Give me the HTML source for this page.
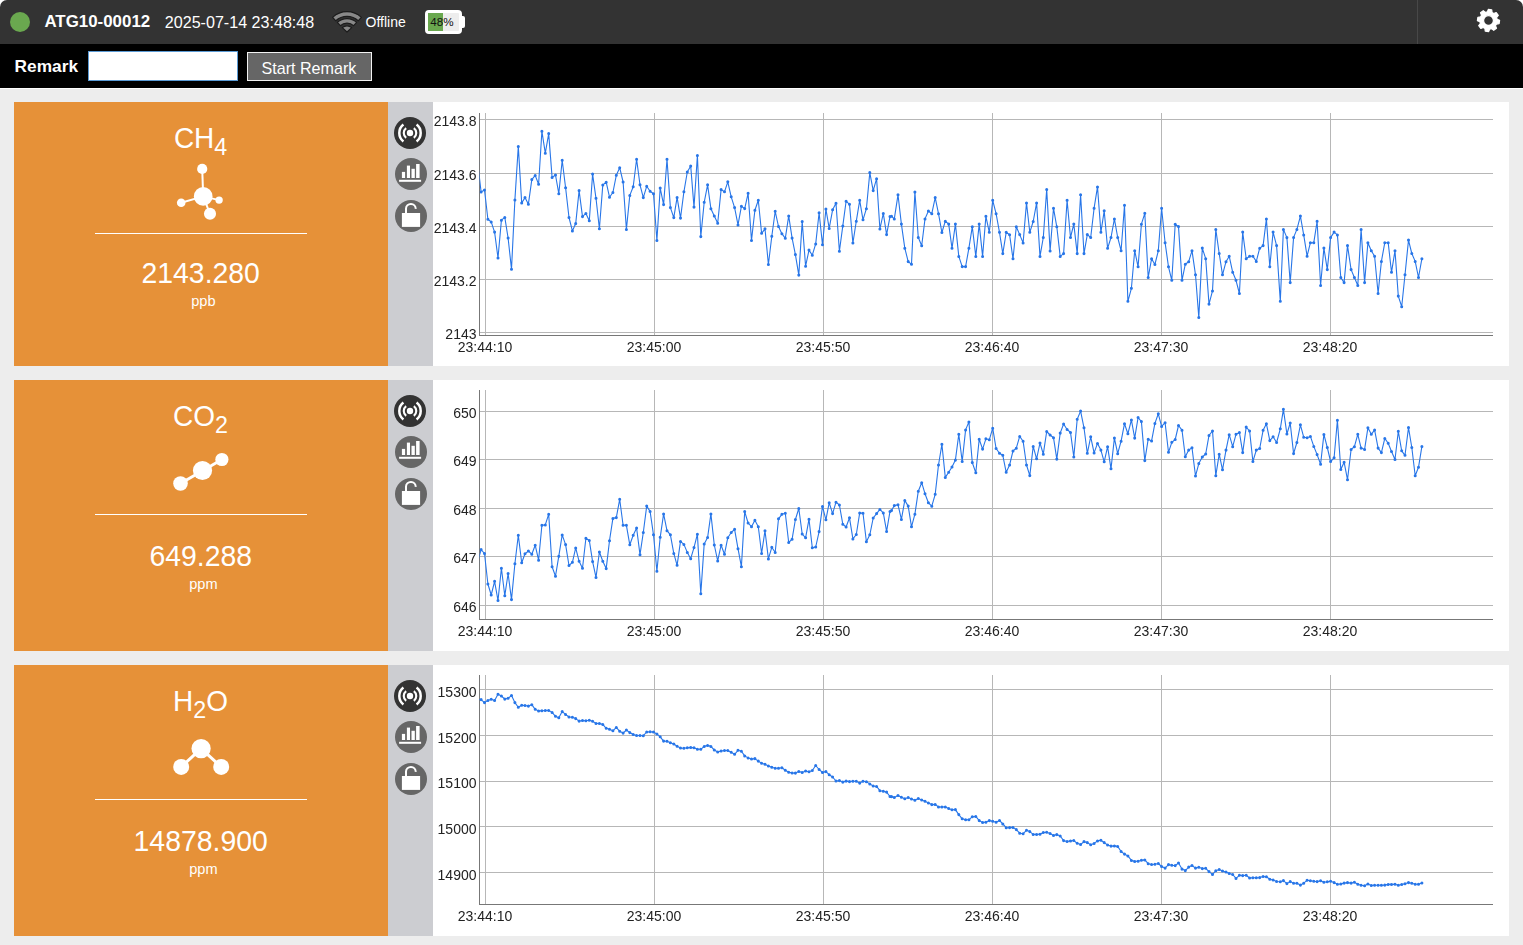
<!DOCTYPE html><html><head><meta charset="utf-8"><title>ATG10-00012</title><style>
html,body{margin:0;padding:0;background:#fff;}
body{width:1523px;height:945px;position:relative;overflow:hidden;font-family:"Liberation Sans", sans-serif;}
.abs,.ch{position:absolute;}
#bg{left:0;top:0;width:1523px;height:945px;background:#ededed;border-radius:7px 7px 0 0;}
#hdr{left:0;top:0;width:1523px;height:44px;background:#333;border-radius:7px 7px 0 0;}
#bar{left:0;top:44px;width:1523px;height:44px;background:#000;border-bottom:1px solid #fff;}
.tx{position:absolute;white-space:nowrap;line-height:1;color:#fff;}
.or{background:#e69138;left:14px;width:374px;}
.gr{background:#cccdd1;left:388px;width:45px;}
.wh{background:#fff;left:433px;width:1076px;}
.hr{background:#fff;height:1px;left:95px;width:212px;}
.g{stroke:#b7b7b7;stroke-width:1;shape-rendering:crispEdges;}
.a{stroke:#777;stroke-width:1;shape-rendering:crispEdges;}
.t{font-family:"Liberation Sans", sans-serif;font-size:14px;fill:#222;}
.l{fill:none;stroke:#2876e8;stroke-width:1.1;stroke-linejoin:round;}
.d{fill:none;stroke:#2876e8;stroke-width:3.05;stroke-linecap:round;}
sub{font-size:23.3px;line-height:0;}
</style></head><body>
<div id="bg" class="abs"></div>
<div id="hdr" class="abs"></div>
<div id="bar" class="abs"></div>
<div class="abs" style="left:10px;top:12px;width:20px;height:20px;border-radius:50%;background:#6aa84f"></div>
<div class="tx" style="left:44.4px;top:13.69px;font-size:16.9px;font-weight:bold;color:#fff;">ATG10-00012</div>
<div class="tx" style="left:164.8px;top:14.37px;font-size:16.1px;color:#fff;">2025-07-14 23:48:48</div>
<svg class="ch" style="left:328px;top:6px" width="38" height="32" viewBox="328 6 38 32"><g fill="#888" stroke="#1c1c1c" stroke-width="1.2" stroke-linejoin="round"><path d="M332.61 17.37 A21.10 21.10 0 0 1 361.39 17.37 L358.18 20.81 A16.40 16.40 0 0 0 335.82 20.81 Z"/><path d="M337.32 22.41 A14.20 14.20 0 0 1 356.68 22.41 L353.62 25.71 A9.70 9.70 0 0 0 340.38 25.71 Z"/><path d="M342.23 27.68 A7.00 7.00 0 0 1 351.77 27.68 L347.00 32.05 Z"/></g></svg>
<div class="tx" style="left:365.5px;top:14.85px;font-size:14px;color:#fff;">Offline</div>
<div class="abs" style="left:425px;top:10px;width:31px;height:18px;border:3px solid #fff;border-radius:4px;background:#ededed"></div>
<div class="abs" style="left:461px;top:16px;width:4px;height:12px;background:#fff;border-radius:0 2px 2px 0"></div>
<div class="abs" style="left:428px;top:13px;width:15px;height:18px;background:#6aa84f"></div>
<div class="tx" style="left:430.3px;top:16.18px;font-size:11.6px;color:#111;">48%</div>
<div class="abs" style="left:1417px;top:0;width:1px;height:44px;background:#484848"></div>
<svg class="ch" style="left:1473px;top:5px" width="32" height="32" viewBox="1473 5 32 32"><path d="M1487.26 11.89 L1488.31 9.40 L1491.75 9.89 L1492.07 12.56 L1493.71 13.53 L1496.21 12.52 L1498.30 15.29 L1496.63 17.41 L1497.11 19.26 L1499.60 20.31 L1499.11 23.75 L1496.44 24.07 L1495.47 25.71 L1496.48 28.21 L1493.71 30.30 L1491.59 28.63 L1489.74 29.11 L1488.69 31.60 L1485.25 31.11 L1484.93 28.44 L1483.29 27.47 L1480.79 28.48 L1478.70 25.71 L1480.37 23.59 L1479.89 21.74 L1477.40 20.69 L1477.89 17.25 L1480.56 16.93 L1481.53 15.29 L1480.52 12.79 L1483.29 10.70 L1485.41 12.37 Z M1483.60 20.50 a4.90 4.90 0 1 0 9.80 0 a4.90 4.90 0 1 0 -9.80 0 Z" fill="#fff" fill-rule="evenodd" stroke="#fff" stroke-width="1.2" stroke-linejoin="round"/></svg>
<div class="tx" style="left:14.6px;top:58.06px;font-size:17.3px;font-weight:bold;color:#fff;">Remark</div>
<div class="abs" style="left:88px;top:51px;width:148px;height:28px;background:#fff;border:1px solid #5b9bd5"></div>
<div class="abs" style="left:247px;top:52px;width:123px;height:27px;background:#666;border:1px solid #f2f2f2"></div>
<div class="tx" style="left:261.5px;top:60.07px;font-size:16.1px;color:#fff;">Start Remark</div>
<div class="abs or" style="top:102px;height:264px"></div>
<div class="abs gr" style="top:102px;height:264px"></div>
<div class="abs wh" style="top:102px;height:264px"></div>
<div class="tx" style="left:200.6px;width:400px;margin-left:-200px;text-align:center;top:125.10px;font-size:28px;transform:scaleY(1.040);transform-origin:50% 22.70px;">CH<sub>4</sub></div>
<svg class="ch" style="left:170px;top:160px" width="64" height="64" viewBox="170 160 64 64">
<line x1="203.2" y1="196.4" x2="202.2" y2="168.9" stroke="#fff" stroke-width="2"/>
<line x1="203.2" y1="196.4" x2="181.2" y2="202.8" stroke="#fff" stroke-width="2"/>
<line x1="203.2" y1="196.4" x2="219.1" y2="200.1" stroke="#fff" stroke-width="2"/>
<line x1="203.2" y1="196.4" x2="210.0" y2="213.8" stroke="#fff" stroke-width="2"/>
<circle cx="203.2" cy="196.4" r="9.35" fill="#fff"/>
<circle cx="202.2" cy="168.9" r="5.10" fill="#fff"/>
<circle cx="181.2" cy="202.8" r="4.30" fill="#fff"/>
<circle cx="219.1" cy="200.1" r="3.70" fill="#fff"/>
<circle cx="210.0" cy="213.8" r="6.05" fill="#fff"/>
</svg>
<div class="abs hr" style="top:233px"></div>
<div class="tx" style="left:200.7px;width:400px;margin-left:-200px;text-align:center;top:258.96px;font-size:28.4px;transform:scaleY(1.040);transform-origin:50% 23.04px;">2143.280</div>
<div class="tx" style="left:203.4px;width:400px;margin-left:-200px;text-align:center;top:294.04px;font-size:14.6px;">ppb</div>
<svg class="ch" style="left:388px;top:113px" width="45" height="130" viewBox="388 113 45 130">
<circle cx="410" cy="133" r="16" fill="#333"/>
<circle cx="410" cy="133" r="3.2" fill="#fff"/>
<path d="M406.15 128.07 A6.25 6.25 0 0 0 406.15 137.93" fill="none" stroke="#fff" stroke-width="2.1"/>
<path d="M413.85 128.07 A6.25 6.25 0 0 1 413.85 137.93" fill="none" stroke="#fff" stroke-width="2.1"/>
<path d="M403.41 124.57 A10.70 10.70 0 0 0 403.41 141.43" fill="none" stroke="#fff" stroke-width="2.5"/>
<path d="M416.59 124.57 A10.70 10.70 0 0 1 416.59 141.43" fill="none" stroke="#fff" stroke-width="2.5"/>
<circle cx="411" cy="174" r="16" fill="#666"/>
<rect x="401.90" y="171.90" width="3.20" height="6.10" fill="#fff"/>
<rect x="406.90" y="165.60" width="3.10" height="12.40" fill="#fff"/>
<rect x="411.50" y="168.80" width="3.30" height="9.20" fill="#fff"/>
<rect x="416.10" y="164.00" width="3.50" height="14.00" fill="#fff"/>
<rect x="399.10" y="179.80" width="22" height="2" fill="#fff"/>
<circle cx="411" cy="216" r="16" fill="#666"/>
<rect x="401.90" y="213.00" width="18.2" height="13.9" fill="#fff"/>
<path d="M406.00 213.50 V208.60 A4.85 4.85 0 0 1 415.70 208.90" fill="none" stroke="#fff" stroke-width="2"/>
</svg>
<svg class="ch" style="left:433px;top:102px;will-change:transform" width="1076" height="264" viewBox="433 102 1076 264">
<line x1="485.5" y1="113" x2="485.5" y2="335.5" class="g"/>
<line x1="654.5" y1="113" x2="654.5" y2="335.5" class="g"/>
<line x1="823.5" y1="113" x2="823.5" y2="335.5" class="g"/>
<line x1="992.5" y1="113" x2="992.5" y2="335.5" class="g"/>
<line x1="1161.5" y1="113" x2="1161.5" y2="335.5" class="g"/>
<line x1="1330.5" y1="113" x2="1330.5" y2="335.5" class="g"/>
<line x1="479" y1="119.5" x2="1493" y2="119.5" class="g"/>
<line x1="479" y1="173.5" x2="1493" y2="173.5" class="g"/>
<line x1="479" y1="226.5" x2="1493" y2="226.5" class="g"/>
<line x1="479" y1="279.5" x2="1493" y2="279.5" class="g"/>
<line x1="479" y1="332.5" x2="1493" y2="332.5" class="g"/>
<line x1="479.5" y1="113" x2="479.5" y2="336.0" class="a"/>
<line x1="479" y1="335.5" x2="1493" y2="335.5" class="a"/>
<text x="476.5" y="125.9" text-anchor="end" class="t">2143.8</text>
<text x="476.5" y="179.9" text-anchor="end" class="t">2143.6</text>
<text x="476.5" y="232.9" text-anchor="end" class="t">2143.4</text>
<text x="476.5" y="285.9" text-anchor="end" class="t">2143.2</text>
<text x="476.5" y="338.9" text-anchor="end" class="t">2143</text>
<text x="485.0" y="352.0" text-anchor="middle" class="t">23:44:10</text>
<text x="654.0" y="352.0" text-anchor="middle" class="t">23:45:00</text>
<text x="823.0" y="352.0" text-anchor="middle" class="t">23:45:50</text>
<text x="992.0" y="352.0" text-anchor="middle" class="t">23:46:40</text>
<text x="1161.0" y="352.0" text-anchor="middle" class="t">23:47:30</text>
<text x="1330.0" y="352.0" text-anchor="middle" class="t">23:48:20</text>
<clipPath id="cp0"><rect x="479.5" y="113" width="1013.5" height="222"/></clipPath>
<g clip-path="url(#cp0)"><path d="M477.7 163.0 L481.1 192.0 L484.5 189.9 L487.9 219.2 L491.2 221.9 L494.6 232.1 L498.0 258.0 L501.4 220.2 L504.8 217.4 L508.1 238.0 L511.5 269.2 L514.9 199.9 L518.3 146.4 L521.7 203.0 L525.0 197.6 L528.4 204.2 L531.8 179.6 L535.2 175.4 L538.6 184.2 L541.9 131.3 L545.3 153.2 L548.7 133.6 L552.1 177.4 L555.5 175.0 L558.8 193.7 L562.2 160.3 L565.6 187.7 L569.0 217.5 L572.4 230.9 L575.7 223.6 L579.1 190.6 L582.5 216.6 L585.9 213.4 L589.3 220.7 L592.6 174.1 L596.0 198.3 L599.4 228.8 L602.8 184.9 L606.2 182.2 L609.5 197.2 L612.9 192.5 L616.3 175.3 L619.7 167.7 L623.1 182.0 L626.4 229.5 L629.8 195.4 L633.2 186.7 L636.6 159.2 L640.0 184.8 L643.3 197.6 L646.7 186.3 L650.1 191.3 L653.5 193.7 L656.9 240.5 L660.2 188.1 L663.6 204.6 L667.0 159.2 L670.4 207.6 L673.8 217.6 L677.1 197.4 L680.5 218.1 L683.9 191.8 L687.3 172.0 L690.7 165.9 L694.0 207.1 L697.4 155.5 L700.8 236.6 L704.2 202.3 L707.6 184.8 L710.9 208.7 L714.3 216.0 L717.7 223.2 L721.1 189.6 L724.5 191.8 L727.8 181.8 L731.2 196.8 L734.6 207.6 L738.0 224.9 L741.4 206.3 L744.7 208.6 L748.1 193.3 L751.5 240.4 L754.9 210.2 L758.3 200.3 L761.6 233.3 L765.0 228.8 L768.4 264.5 L771.8 236.2 L775.2 211.3 L778.5 226.5 L781.9 233.7 L785.3 238.3 L788.7 215.9 L792.1 238.1 L795.4 254.6 L798.8 275.1 L802.2 221.6 L805.6 266.2 L809.0 250.1 L812.3 255.2 L815.7 243.9 L819.1 212.8 L822.5 244.7 L825.9 209.1 L829.2 228.4 L832.6 209.8 L836.0 203.2 L839.4 251.3 L842.8 225.9 L846.1 201.2 L849.5 204.3 L852.9 243.0 L856.3 221.2 L859.7 200.3 L863.0 219.8 L866.4 208.7 L869.8 172.6 L873.2 190.6 L876.6 178.7 L879.9 229.0 L883.3 213.4 L886.6 234.6 L890.0 216.6 L891.5 216.3 L894.3 218.9 L898.0 194.8 L901.4 224.1 L904.8 248.2 L908.2 261.6 L911.5 264.3 L914.9 192.1 L918.3 237.5 L921.7 245.7 L925.0 218.9 L928.4 211.0 L931.8 213.7 L935.2 197.6 L938.5 213.7 L941.9 232.5 L945.3 221.2 L948.7 224.1 L952.0 248.3 L955.4 224.1 L958.8 256.4 L962.2 266.6 L965.6 266.6 L968.9 248.2 L972.3 226.7 L975.8 256.4 L979.2 224.1 L982.6 256.4 L985.9 216.3 L989.3 232.3 L992.7 200.3 L996.1 213.7 L999.5 232.3 L1002.8 253.6 L1006.2 232.3 L1009.6 234.8 L1013.0 258.8 L1016.3 226.7 L1019.7 234.6 L1023.1 242.9 L1026.5 202.9 L1029.8 232.3 L1033.2 221.5 L1036.6 202.9 L1040.0 256.4 L1043.3 237.5 L1046.7 189.4 L1050.1 250.9 L1053.5 208.2 L1056.8 226.8 L1060.2 256.4 L1063.6 253.6 L1067.1 200.3 L1070.5 237.5 L1073.8 224.1 L1077.2 253.6 L1080.6 194.8 L1084.0 253.6 L1087.3 234.6 L1090.7 237.5 L1094.1 208.2 L1097.5 186.9 L1100.9 232.3 L1104.2 210.8 L1107.6 248.3 L1111.0 237.5 L1114.4 218.9 L1117.7 237.5 L1121.1 250.7 L1124.5 205.3 L1127.9 301.3 L1131.4 288.3 L1134.7 250.7 L1138.1 266.8 L1141.4 224.2 L1144.8 213.3 L1148.2 277.5 L1151.6 258.7 L1154.9 264.5 L1158.3 250.8 L1161.6 208.2 L1165.1 242.7 L1168.5 266.8 L1171.8 280.3 L1175.2 224.3 L1178.5 226.6 L1182.0 280.3 L1185.3 264.2 L1188.7 261.7 L1192.0 250.7 L1195.5 274.8 L1198.8 317.4 L1202.3 248.1 L1205.7 258.7 L1209.0 304.1 L1212.5 290.9 L1215.8 229.4 L1219.2 253.5 L1222.5 274.8 L1226.0 261.7 L1229.2 256.2 L1232.7 272.3 L1236.0 280.3 L1239.4 293.5 L1242.7 232.1 L1246.2 258.7 L1249.6 256.2 L1252.9 256.2 L1256.3 261.4 L1259.7 248.2 L1263.1 245.6 L1266.4 218.9 L1269.8 266.8 L1273.1 232.1 L1276.6 245.6 L1280.3 301.3 L1283.4 229.4 L1286.9 237.6 L1290.2 282.6 L1293.6 237.4 L1296.9 229.4 L1300.4 216.1 L1303.7 234.9 L1307.1 256.2 L1310.4 242.7 L1313.8 242.7 L1317.1 221.3 L1320.6 285.5 L1323.9 248.1 L1327.3 269.6 L1330.6 237.6 L1334.1 232.1 L1337.4 234.9 L1340.8 277.5 L1344.1 282.6 L1347.5 245.6 L1351.1 269.6 L1354.4 277.5 L1357.8 285.5 L1361.1 229.4 L1364.6 282.6 L1367.9 242.7 L1371.3 250.7 L1374.6 256.2 L1378.1 293.5 L1381.4 261.4 L1384.8 242.7 L1388.2 242.7 L1391.5 272.3 L1395.0 250.7 L1398.3 296.1 L1401.7 306.7 L1405.0 274.8 L1408.5 240.1 L1411.8 253.5 L1415.2 261.4 L1418.5 277.5 L1421.9 258.7" class="l"/>
<path d="M477.7 163.0h0M481.1 192.0h0M484.5 189.9h0M487.9 219.2h0M491.2 221.9h0M494.6 232.1h0M498.0 258.0h0M501.4 220.2h0M504.8 217.4h0M508.1 238.0h0M511.5 269.2h0M514.9 199.9h0M518.3 146.4h0M521.7 203.0h0M525.0 197.6h0M528.4 204.2h0M531.8 179.6h0M535.2 175.4h0M538.6 184.2h0M541.9 131.3h0M545.3 153.2h0M548.7 133.6h0M552.1 177.4h0M555.5 175.0h0M558.8 193.7h0M562.2 160.3h0M565.6 187.7h0M569.0 217.5h0M572.4 230.9h0M575.7 223.6h0M579.1 190.6h0M582.5 216.6h0M585.9 213.4h0M589.3 220.7h0M592.6 174.1h0M596.0 198.3h0M599.4 228.8h0M602.8 184.9h0M606.2 182.2h0M609.5 197.2h0M612.9 192.5h0M616.3 175.3h0M619.7 167.7h0M623.1 182.0h0M626.4 229.5h0M629.8 195.4h0M633.2 186.7h0M636.6 159.2h0M640.0 184.8h0M643.3 197.6h0M646.7 186.3h0M650.1 191.3h0M653.5 193.7h0M656.9 240.5h0M660.2 188.1h0M663.6 204.6h0M667.0 159.2h0M670.4 207.6h0M673.8 217.6h0M677.1 197.4h0M680.5 218.1h0M683.9 191.8h0M687.3 172.0h0M690.7 165.9h0M694.0 207.1h0M697.4 155.5h0M700.8 236.6h0M704.2 202.3h0M707.6 184.8h0M710.9 208.7h0M714.3 216.0h0M717.7 223.2h0M721.1 189.6h0M724.5 191.8h0M727.8 181.8h0M731.2 196.8h0M734.6 207.6h0M738.0 224.9h0M741.4 206.3h0M744.7 208.6h0M748.1 193.3h0M751.5 240.4h0M754.9 210.2h0M758.3 200.3h0M761.6 233.3h0M765.0 228.8h0M768.4 264.5h0M771.8 236.2h0M775.2 211.3h0M778.5 226.5h0M781.9 233.7h0M785.3 238.3h0M788.7 215.9h0M792.1 238.1h0M795.4 254.6h0M798.8 275.1h0M802.2 221.6h0M805.6 266.2h0M809.0 250.1h0M812.3 255.2h0M815.7 243.9h0M819.1 212.8h0M822.5 244.7h0M825.9 209.1h0M829.2 228.4h0M832.6 209.8h0M836.0 203.2h0M839.4 251.3h0M842.8 225.9h0M846.1 201.2h0M849.5 204.3h0M852.9 243.0h0M856.3 221.2h0M859.7 200.3h0M863.0 219.8h0M866.4 208.7h0M869.8 172.6h0M873.2 190.6h0M876.6 178.7h0M879.9 229.0h0M883.3 213.4h0M886.6 234.6h0M890.0 216.6h0M891.5 216.3h0M894.3 218.9h0M898.0 194.8h0M901.4 224.1h0M904.8 248.2h0M908.2 261.6h0M911.5 264.3h0M914.9 192.1h0M918.3 237.5h0M921.7 245.7h0M925.0 218.9h0M928.4 211.0h0M931.8 213.7h0M935.2 197.6h0M938.5 213.7h0M941.9 232.5h0M945.3 221.2h0M948.7 224.1h0M952.0 248.3h0M955.4 224.1h0M958.8 256.4h0M962.2 266.6h0M965.6 266.6h0M968.9 248.2h0M972.3 226.7h0M975.8 256.4h0M979.2 224.1h0M982.6 256.4h0M985.9 216.3h0M989.3 232.3h0M992.7 200.3h0M996.1 213.7h0M999.5 232.3h0M1002.8 253.6h0M1006.2 232.3h0M1009.6 234.8h0M1013.0 258.8h0M1016.3 226.7h0M1019.7 234.6h0M1023.1 242.9h0M1026.5 202.9h0M1029.8 232.3h0M1033.2 221.5h0M1036.6 202.9h0M1040.0 256.4h0M1043.3 237.5h0M1046.7 189.4h0M1050.1 250.9h0M1053.5 208.2h0M1056.8 226.8h0M1060.2 256.4h0M1063.6 253.6h0M1067.1 200.3h0M1070.5 237.5h0M1073.8 224.1h0M1077.2 253.6h0M1080.6 194.8h0M1084.0 253.6h0M1087.3 234.6h0M1090.7 237.5h0M1094.1 208.2h0M1097.5 186.9h0M1100.9 232.3h0M1104.2 210.8h0M1107.6 248.3h0M1111.0 237.5h0M1114.4 218.9h0M1117.7 237.5h0M1121.1 250.7h0M1124.5 205.3h0M1127.9 301.3h0M1131.4 288.3h0M1134.7 250.7h0M1138.1 266.8h0M1141.4 224.2h0M1144.8 213.3h0M1148.2 277.5h0M1151.6 258.7h0M1154.9 264.5h0M1158.3 250.8h0M1161.6 208.2h0M1165.1 242.7h0M1168.5 266.8h0M1171.8 280.3h0M1175.2 224.3h0M1178.5 226.6h0M1182.0 280.3h0M1185.3 264.2h0M1188.7 261.7h0M1192.0 250.7h0M1195.5 274.8h0M1198.8 317.4h0M1202.3 248.1h0M1205.7 258.7h0M1209.0 304.1h0M1212.5 290.9h0M1215.8 229.4h0M1219.2 253.5h0M1222.5 274.8h0M1226.0 261.7h0M1229.2 256.2h0M1232.7 272.3h0M1236.0 280.3h0M1239.4 293.5h0M1242.7 232.1h0M1246.2 258.7h0M1249.6 256.2h0M1252.9 256.2h0M1256.3 261.4h0M1259.7 248.2h0M1263.1 245.6h0M1266.4 218.9h0M1269.8 266.8h0M1273.1 232.1h0M1276.6 245.6h0M1280.3 301.3h0M1283.4 229.4h0M1286.9 237.6h0M1290.2 282.6h0M1293.6 237.4h0M1296.9 229.4h0M1300.4 216.1h0M1303.7 234.9h0M1307.1 256.2h0M1310.4 242.7h0M1313.8 242.7h0M1317.1 221.3h0M1320.6 285.5h0M1323.9 248.1h0M1327.3 269.6h0M1330.6 237.6h0M1334.1 232.1h0M1337.4 234.9h0M1340.8 277.5h0M1344.1 282.6h0M1347.5 245.6h0M1351.1 269.6h0M1354.4 277.5h0M1357.8 285.5h0M1361.1 229.4h0M1364.6 282.6h0M1367.9 242.7h0M1371.3 250.7h0M1374.6 256.2h0M1378.1 293.5h0M1381.4 261.4h0M1384.8 242.7h0M1388.2 242.7h0M1391.5 272.3h0M1395.0 250.7h0M1398.3 296.1h0M1401.7 306.7h0M1405.0 274.8h0M1408.5 240.1h0M1411.8 253.5h0M1415.2 261.4h0M1418.5 277.5h0M1421.9 258.7h0" class="d"/></g>
</svg>
<div class="abs or" style="top:380px;height:271px"></div>
<div class="abs gr" style="top:380px;height:271px"></div>
<div class="abs wh" style="top:380px;height:271px"></div>
<div class="tx" style="left:200.6px;width:400px;margin-left:-200px;text-align:center;top:403.30px;font-size:28px;transform:scaleY(1.040);transform-origin:50% 22.70px;">CO<sub>2</sub></div>
<svg class="ch" style="left:170px;top:445px" width="64" height="54" viewBox="170 445 64 54">
<line x1="180.5" y1="483.5" x2="221.9" y2="459.5" stroke="#fff" stroke-width="3"/>
<circle cx="180.5" cy="483.5" r="7.30" fill="#fff"/>
<circle cx="202.5" cy="470.5" r="9.60" fill="#fff"/>
<circle cx="221.9" cy="459.5" r="6.60" fill="#fff"/>
</svg>
<div class="abs hr" style="top:514px"></div>
<div class="tx" style="left:200.7px;width:400px;margin-left:-200px;text-align:center;top:542.46px;font-size:28.4px;transform:scaleY(1.040);transform-origin:50% 23.04px;">649.288</div>
<div class="tx" style="left:203.4px;width:400px;margin-left:-200px;text-align:center;top:577.04px;font-size:14.6px;">ppm</div>
<svg class="ch" style="left:388px;top:391px" width="45" height="130" viewBox="388 391 45 130">
<circle cx="410" cy="411" r="16" fill="#333"/>
<circle cx="410" cy="411" r="3.2" fill="#fff"/>
<path d="M406.15 406.07 A6.25 6.25 0 0 0 406.15 415.93" fill="none" stroke="#fff" stroke-width="2.1"/>
<path d="M413.85 406.07 A6.25 6.25 0 0 1 413.85 415.93" fill="none" stroke="#fff" stroke-width="2.1"/>
<path d="M403.41 402.57 A10.70 10.70 0 0 0 403.41 419.43" fill="none" stroke="#fff" stroke-width="2.5"/>
<path d="M416.59 402.57 A10.70 10.70 0 0 1 416.59 419.43" fill="none" stroke="#fff" stroke-width="2.5"/>
<circle cx="411" cy="452" r="16" fill="#666"/>
<rect x="401.90" y="448.90" width="3.20" height="6.10" fill="#fff"/>
<rect x="406.90" y="442.60" width="3.10" height="12.40" fill="#fff"/>
<rect x="411.50" y="445.80" width="3.30" height="9.20" fill="#fff"/>
<rect x="416.10" y="441.00" width="3.50" height="14.00" fill="#fff"/>
<rect x="399.10" y="456.80" width="22" height="2" fill="#fff"/>
<circle cx="411" cy="494" r="16" fill="#666"/>
<rect x="401.90" y="491.00" width="18.2" height="13.9" fill="#fff"/>
<path d="M406.00 491.50 V486.60 A4.85 4.85 0 0 1 415.70 486.90" fill="none" stroke="#fff" stroke-width="2"/>
</svg>
<svg class="ch" style="left:433px;top:380px;will-change:transform" width="1076" height="271" viewBox="433 380 1076 271">
<line x1="485.5" y1="390" x2="485.5" y2="619.5" class="g"/>
<line x1="654.5" y1="390" x2="654.5" y2="619.5" class="g"/>
<line x1="823.5" y1="390" x2="823.5" y2="619.5" class="g"/>
<line x1="992.5" y1="390" x2="992.5" y2="619.5" class="g"/>
<line x1="1161.5" y1="390" x2="1161.5" y2="619.5" class="g"/>
<line x1="1330.5" y1="390" x2="1330.5" y2="619.5" class="g"/>
<line x1="479" y1="411.5" x2="1493" y2="411.5" class="g"/>
<line x1="479" y1="459.5" x2="1493" y2="459.5" class="g"/>
<line x1="479" y1="508.5" x2="1493" y2="508.5" class="g"/>
<line x1="479" y1="556.5" x2="1493" y2="556.5" class="g"/>
<line x1="479" y1="605.5" x2="1493" y2="605.5" class="g"/>
<line x1="479.5" y1="390" x2="479.5" y2="620.0" class="a"/>
<line x1="479" y1="619.5" x2="1493" y2="619.5" class="a"/>
<text x="476.5" y="417.9" text-anchor="end" class="t">650</text>
<text x="476.5" y="465.9" text-anchor="end" class="t">649</text>
<text x="476.5" y="514.9" text-anchor="end" class="t">648</text>
<text x="476.5" y="562.9" text-anchor="end" class="t">647</text>
<text x="476.5" y="611.9" text-anchor="end" class="t">646</text>
<text x="485.0" y="635.6" text-anchor="middle" class="t">23:44:10</text>
<text x="654.0" y="635.6" text-anchor="middle" class="t">23:45:00</text>
<text x="823.0" y="635.6" text-anchor="middle" class="t">23:45:50</text>
<text x="992.0" y="635.6" text-anchor="middle" class="t">23:46:40</text>
<text x="1161.0" y="635.6" text-anchor="middle" class="t">23:47:30</text>
<text x="1330.0" y="635.6" text-anchor="middle" class="t">23:48:20</text>
<clipPath id="cp1"><rect x="479.5" y="390" width="1013.5" height="229"/></clipPath>
<g clip-path="url(#cp1)"><path d="M477.7 562.0 L481.1 549.6 L484.5 553.5 L487.9 584.0 L491.2 595.0 L494.6 581.3 L498.0 600.5 L501.4 568.2 L504.8 595.7 L508.1 573.5 L511.5 599.6 L514.9 563.7 L518.3 535.2 L521.7 562.7 L525.0 553.8 L528.4 551.0 L531.8 554.2 L535.2 545.2 L538.6 560.2 L541.9 525.2 L545.3 524.9 L548.7 514.2 L552.1 566.8 L555.5 576.2 L558.8 556.2 L562.2 534.9 L565.6 544.6 L569.0 565.5 L572.4 562.3 L575.7 547.9 L579.1 561.3 L582.5 568.2 L585.9 538.2 L589.3 540.4 L592.6 561.6 L596.0 577.4 L599.4 552.0 L602.8 561.3 L606.2 568.6 L609.5 540.7 L612.9 518.4 L616.3 517.6 L619.7 499.3 L623.1 525.3 L626.4 525.3 L629.8 544.8 L633.2 535.2 L636.6 528.0 L640.0 554.7 L643.3 532.5 L646.7 506.1 L650.1 511.4 L653.5 534.8 L656.9 571.2 L660.2 537.3 L663.6 513.9 L667.0 530.7 L670.4 534.8 L673.8 553.4 L677.1 565.3 L680.5 541.4 L683.9 544.4 L687.3 552.4 L690.7 558.7 L694.0 547.6 L697.4 534.2 L700.8 593.7 L704.2 543.9 L707.6 537.5 L710.9 513.9 L714.3 545.0 L717.7 560.9 L721.1 545.2 L724.5 554.2 L727.8 537.7 L731.2 532.5 L734.6 529.3 L738.0 548.7 L741.4 566.7 L744.7 511.6 L748.1 523.0 L751.5 526.7 L754.9 520.2 L758.3 526.7 L761.6 553.5 L765.0 530.7 L768.4 558.9 L771.8 547.3 L775.2 552.5 L778.5 518.8 L781.9 514.3 L785.3 513.3 L788.7 542.5 L792.1 539.2 L795.4 519.5 L798.8 508.5 L802.2 534.0 L805.6 537.8 L809.0 519.2 L812.3 547.7 L815.7 547.0 L819.1 531.6 L822.5 506.4 L825.9 519.8 L829.2 502.7 L832.6 513.6 L836.0 502.2 L839.4 505.0 L842.8 524.2 L846.1 527.0 L849.5 517.8 L852.9 538.9 L856.3 534.5 L859.7 512.9 L863.0 513.2 L866.4 541.7 L869.8 534.8 L873.2 518.0 L876.6 513.6 L879.9 509.4 L883.3 512.9 L886.6 531.4 L890.0 511.4 L891.5 510.5 L894.3 505.6 L898.0 504.7 L901.4 519.4 L904.8 500.4 L908.2 506.1 L911.5 526.8 L914.9 514.2 L918.3 491.2 L921.7 482.7 L925.0 493.7 L928.4 502.8 L931.8 506.2 L935.2 494.3 L938.5 465.0 L941.9 444.3 L945.3 477.4 L948.7 472.3 L952.0 467.0 L955.4 460.1 L958.8 434.3 L962.2 461.5 L965.6 429.9 L968.9 421.9 L972.3 462.6 L975.8 472.8 L979.2 439.2 L982.6 449.1 L985.9 438.8 L989.3 439.8 L992.7 428.2 L996.1 448.5 L999.5 453.3 L1002.8 455.3 L1006.2 472.3 L1009.6 465.0 L1013.0 450.9 L1016.3 448.2 L1019.7 436.4 L1023.1 441.2 L1026.5 465.0 L1029.8 475.6 L1033.2 446.4 L1036.6 458.8 L1040.0 443.0 L1043.3 454.2 L1046.7 431.5 L1050.1 435.0 L1053.5 437.7 L1056.8 459.1 L1060.2 433.1 L1063.6 424.0 L1067.1 429.5 L1070.5 432.4 L1073.8 457.0 L1077.2 419.3 L1080.6 411.1 L1084.0 427.8 L1087.3 453.3 L1090.7 436.8 L1094.1 452.9 L1097.5 443.4 L1100.9 450.1 L1104.2 461.8 L1107.6 446.7 L1111.0 468.8 L1114.4 438.1 L1117.7 453.7 L1121.1 441.2 L1124.5 423.7 L1127.9 433.7 L1131.4 420.0 L1134.7 438.1 L1138.1 417.5 L1141.4 421.6 L1144.8 460.6 L1148.2 439.2 L1151.6 440.9 L1154.9 423.4 L1158.3 413.8 L1161.6 426.4 L1165.1 422.7 L1168.5 452.3 L1171.8 442.3 L1175.2 439.5 L1178.5 425.5 L1182.0 430.2 L1185.3 456.7 L1188.7 450.1 L1192.0 447.8 L1195.5 476.0 L1198.8 463.6 L1202.3 457.0 L1205.7 454.0 L1209.0 435.4 L1212.5 431.0 L1215.8 475.7 L1219.2 454.2 L1222.5 469.8 L1226.0 450.1 L1229.2 434.7 L1232.7 446.7 L1236.0 434.3 L1239.4 432.4 L1242.7 452.6 L1246.2 427.1 L1249.6 431.0 L1252.9 461.5 L1256.3 450.1 L1259.7 448.5 L1263.1 430.3 L1266.4 423.7 L1269.8 440.6 L1273.1 436.8 L1276.6 442.5 L1280.3 428.8 L1283.4 409.3 L1286.9 434.0 L1290.2 423.0 L1293.6 453.6 L1296.9 442.5 L1300.4 424.8 L1303.7 437.2 L1307.1 437.7 L1310.4 436.4 L1313.8 446.4 L1317.1 454.6 L1320.6 464.3 L1323.9 434.4 L1327.3 447.5 L1330.6 461.5 L1334.1 457.8 L1337.4 420.3 L1340.8 469.5 L1344.1 462.2 L1347.5 479.7 L1351.1 449.4 L1354.4 446.7 L1357.8 434.3 L1361.1 448.1 L1364.6 449.4 L1367.9 427.8 L1371.3 434.3 L1374.6 429.9 L1378.1 448.1 L1381.4 452.6 L1384.8 438.4 L1388.2 443.2 L1391.5 451.5 L1395.0 459.5 L1398.3 431.3 L1401.7 450.8 L1405.0 455.3 L1408.5 427.6 L1411.8 447.5 L1415.2 475.7 L1418.5 467.3 L1421.9 446.4" class="l"/>
<path d="M477.7 562.0h0M481.1 549.6h0M484.5 553.5h0M487.9 584.0h0M491.2 595.0h0M494.6 581.3h0M498.0 600.5h0M501.4 568.2h0M504.8 595.7h0M508.1 573.5h0M511.5 599.6h0M514.9 563.7h0M518.3 535.2h0M521.7 562.7h0M525.0 553.8h0M528.4 551.0h0M531.8 554.2h0M535.2 545.2h0M538.6 560.2h0M541.9 525.2h0M545.3 524.9h0M548.7 514.2h0M552.1 566.8h0M555.5 576.2h0M558.8 556.2h0M562.2 534.9h0M565.6 544.6h0M569.0 565.5h0M572.4 562.3h0M575.7 547.9h0M579.1 561.3h0M582.5 568.2h0M585.9 538.2h0M589.3 540.4h0M592.6 561.6h0M596.0 577.4h0M599.4 552.0h0M602.8 561.3h0M606.2 568.6h0M609.5 540.7h0M612.9 518.4h0M616.3 517.6h0M619.7 499.3h0M623.1 525.3h0M626.4 525.3h0M629.8 544.8h0M633.2 535.2h0M636.6 528.0h0M640.0 554.7h0M643.3 532.5h0M646.7 506.1h0M650.1 511.4h0M653.5 534.8h0M656.9 571.2h0M660.2 537.3h0M663.6 513.9h0M667.0 530.7h0M670.4 534.8h0M673.8 553.4h0M677.1 565.3h0M680.5 541.4h0M683.9 544.4h0M687.3 552.4h0M690.7 558.7h0M694.0 547.6h0M697.4 534.2h0M700.8 593.7h0M704.2 543.9h0M707.6 537.5h0M710.9 513.9h0M714.3 545.0h0M717.7 560.9h0M721.1 545.2h0M724.5 554.2h0M727.8 537.7h0M731.2 532.5h0M734.6 529.3h0M738.0 548.7h0M741.4 566.7h0M744.7 511.6h0M748.1 523.0h0M751.5 526.7h0M754.9 520.2h0M758.3 526.7h0M761.6 553.5h0M765.0 530.7h0M768.4 558.9h0M771.8 547.3h0M775.2 552.5h0M778.5 518.8h0M781.9 514.3h0M785.3 513.3h0M788.7 542.5h0M792.1 539.2h0M795.4 519.5h0M798.8 508.5h0M802.2 534.0h0M805.6 537.8h0M809.0 519.2h0M812.3 547.7h0M815.7 547.0h0M819.1 531.6h0M822.5 506.4h0M825.9 519.8h0M829.2 502.7h0M832.6 513.6h0M836.0 502.2h0M839.4 505.0h0M842.8 524.2h0M846.1 527.0h0M849.5 517.8h0M852.9 538.9h0M856.3 534.5h0M859.7 512.9h0M863.0 513.2h0M866.4 541.7h0M869.8 534.8h0M873.2 518.0h0M876.6 513.6h0M879.9 509.4h0M883.3 512.9h0M886.6 531.4h0M890.0 511.4h0M891.5 510.5h0M894.3 505.6h0M898.0 504.7h0M901.4 519.4h0M904.8 500.4h0M908.2 506.1h0M911.5 526.8h0M914.9 514.2h0M918.3 491.2h0M921.7 482.7h0M925.0 493.7h0M928.4 502.8h0M931.8 506.2h0M935.2 494.3h0M938.5 465.0h0M941.9 444.3h0M945.3 477.4h0M948.7 472.3h0M952.0 467.0h0M955.4 460.1h0M958.8 434.3h0M962.2 461.5h0M965.6 429.9h0M968.9 421.9h0M972.3 462.6h0M975.8 472.8h0M979.2 439.2h0M982.6 449.1h0M985.9 438.8h0M989.3 439.8h0M992.7 428.2h0M996.1 448.5h0M999.5 453.3h0M1002.8 455.3h0M1006.2 472.3h0M1009.6 465.0h0M1013.0 450.9h0M1016.3 448.2h0M1019.7 436.4h0M1023.1 441.2h0M1026.5 465.0h0M1029.8 475.6h0M1033.2 446.4h0M1036.6 458.8h0M1040.0 443.0h0M1043.3 454.2h0M1046.7 431.5h0M1050.1 435.0h0M1053.5 437.7h0M1056.8 459.1h0M1060.2 433.1h0M1063.6 424.0h0M1067.1 429.5h0M1070.5 432.4h0M1073.8 457.0h0M1077.2 419.3h0M1080.6 411.1h0M1084.0 427.8h0M1087.3 453.3h0M1090.7 436.8h0M1094.1 452.9h0M1097.5 443.4h0M1100.9 450.1h0M1104.2 461.8h0M1107.6 446.7h0M1111.0 468.8h0M1114.4 438.1h0M1117.7 453.7h0M1121.1 441.2h0M1124.5 423.7h0M1127.9 433.7h0M1131.4 420.0h0M1134.7 438.1h0M1138.1 417.5h0M1141.4 421.6h0M1144.8 460.6h0M1148.2 439.2h0M1151.6 440.9h0M1154.9 423.4h0M1158.3 413.8h0M1161.6 426.4h0M1165.1 422.7h0M1168.5 452.3h0M1171.8 442.3h0M1175.2 439.5h0M1178.5 425.5h0M1182.0 430.2h0M1185.3 456.7h0M1188.7 450.1h0M1192.0 447.8h0M1195.5 476.0h0M1198.8 463.6h0M1202.3 457.0h0M1205.7 454.0h0M1209.0 435.4h0M1212.5 431.0h0M1215.8 475.7h0M1219.2 454.2h0M1222.5 469.8h0M1226.0 450.1h0M1229.2 434.7h0M1232.7 446.7h0M1236.0 434.3h0M1239.4 432.4h0M1242.7 452.6h0M1246.2 427.1h0M1249.6 431.0h0M1252.9 461.5h0M1256.3 450.1h0M1259.7 448.5h0M1263.1 430.3h0M1266.4 423.7h0M1269.8 440.6h0M1273.1 436.8h0M1276.6 442.5h0M1280.3 428.8h0M1283.4 409.3h0M1286.9 434.0h0M1290.2 423.0h0M1293.6 453.6h0M1296.9 442.5h0M1300.4 424.8h0M1303.7 437.2h0M1307.1 437.7h0M1310.4 436.4h0M1313.8 446.4h0M1317.1 454.6h0M1320.6 464.3h0M1323.9 434.4h0M1327.3 447.5h0M1330.6 461.5h0M1334.1 457.8h0M1337.4 420.3h0M1340.8 469.5h0M1344.1 462.2h0M1347.5 479.7h0M1351.1 449.4h0M1354.4 446.7h0M1357.8 434.3h0M1361.1 448.1h0M1364.6 449.4h0M1367.9 427.8h0M1371.3 434.3h0M1374.6 429.9h0M1378.1 448.1h0M1381.4 452.6h0M1384.8 438.4h0M1388.2 443.2h0M1391.5 451.5h0M1395.0 459.5h0M1398.3 431.3h0M1401.7 450.8h0M1405.0 455.3h0M1408.5 427.6h0M1411.8 447.5h0M1415.2 475.7h0M1418.5 467.3h0M1421.9 446.4h0" class="d"/></g>
</svg>
<div class="abs or" style="top:665px;height:271px"></div>
<div class="abs gr" style="top:665px;height:271px"></div>
<div class="abs wh" style="top:665px;height:271px"></div>
<div class="tx" style="left:200.6px;width:400px;margin-left:-200px;text-align:center;top:688.30px;font-size:28px;transform:scaleY(1.040);transform-origin:50% 22.70px;">H<sub>2</sub>O</div>
<svg class="ch" style="left:170px;top:735px" width="64" height="44" viewBox="170 735 64 44">
<path d="M181.2 766.9 L201.1 748.6 L221.2 766.9" fill="none" stroke="#fff" stroke-width="3"/>
<circle cx="201.1" cy="748.6" r="9.60" fill="#fff"/>
<circle cx="181.2" cy="766.9" r="8.00" fill="#fff"/>
<circle cx="221.2" cy="766.9" r="8.00" fill="#fff"/>
</svg>
<div class="abs hr" style="top:799px"></div>
<div class="tx" style="left:200.7px;width:400px;margin-left:-200px;text-align:center;top:827.46px;font-size:28.4px;transform:scaleY(1.040);transform-origin:50% 23.04px;">14878.900</div>
<div class="tx" style="left:203.4px;width:400px;margin-left:-200px;text-align:center;top:862.04px;font-size:14.6px;">ppm</div>
<svg class="ch" style="left:388px;top:676px" width="45" height="130" viewBox="388 676 45 130">
<circle cx="410" cy="696" r="16" fill="#333"/>
<circle cx="410" cy="696" r="3.2" fill="#fff"/>
<path d="M406.15 691.07 A6.25 6.25 0 0 0 406.15 700.93" fill="none" stroke="#fff" stroke-width="2.1"/>
<path d="M413.85 691.07 A6.25 6.25 0 0 1 413.85 700.93" fill="none" stroke="#fff" stroke-width="2.1"/>
<path d="M403.41 687.57 A10.70 10.70 0 0 0 403.41 704.43" fill="none" stroke="#fff" stroke-width="2.5"/>
<path d="M416.59 687.57 A10.70 10.70 0 0 1 416.59 704.43" fill="none" stroke="#fff" stroke-width="2.5"/>
<circle cx="411" cy="737" r="16" fill="#666"/>
<rect x="401.90" y="733.90" width="3.20" height="6.10" fill="#fff"/>
<rect x="406.90" y="727.60" width="3.10" height="12.40" fill="#fff"/>
<rect x="411.50" y="730.80" width="3.30" height="9.20" fill="#fff"/>
<rect x="416.10" y="726.00" width="3.50" height="14.00" fill="#fff"/>
<rect x="399.10" y="741.80" width="22" height="2" fill="#fff"/>
<circle cx="411" cy="779" r="16" fill="#666"/>
<rect x="401.90" y="776.00" width="18.2" height="13.9" fill="#fff"/>
<path d="M406.00 776.50 V771.60 A4.85 4.85 0 0 1 415.70 771.90" fill="none" stroke="#fff" stroke-width="2"/>
</svg>
<svg class="ch" style="left:433px;top:665px;will-change:transform" width="1076" height="271" viewBox="433 665 1076 271">
<line x1="485.5" y1="675" x2="485.5" y2="904.5" class="g"/>
<line x1="654.5" y1="675" x2="654.5" y2="904.5" class="g"/>
<line x1="823.5" y1="675" x2="823.5" y2="904.5" class="g"/>
<line x1="992.5" y1="675" x2="992.5" y2="904.5" class="g"/>
<line x1="1161.5" y1="675" x2="1161.5" y2="904.5" class="g"/>
<line x1="1330.5" y1="675" x2="1330.5" y2="904.5" class="g"/>
<line x1="479" y1="689.5" x2="1493" y2="689.5" class="g"/>
<line x1="479" y1="735.5" x2="1493" y2="735.5" class="g"/>
<line x1="479" y1="781.5" x2="1493" y2="781.5" class="g"/>
<line x1="479" y1="826.5" x2="1493" y2="826.5" class="g"/>
<line x1="479" y1="872.5" x2="1493" y2="872.5" class="g"/>
<line x1="479.5" y1="675" x2="479.5" y2="905.0" class="a"/>
<line x1="479" y1="904.5" x2="1493" y2="904.5" class="a"/>
<text x="476.5" y="696.9" text-anchor="end" class="t">15300</text>
<text x="476.5" y="742.7" text-anchor="end" class="t">15200</text>
<text x="476.5" y="788.4" text-anchor="end" class="t">15100</text>
<text x="476.5" y="834.1" text-anchor="end" class="t">15000</text>
<text x="476.5" y="879.9" text-anchor="end" class="t">14900</text>
<text x="485.0" y="920.6" text-anchor="middle" class="t">23:44:10</text>
<text x="654.0" y="920.6" text-anchor="middle" class="t">23:45:00</text>
<text x="823.0" y="920.6" text-anchor="middle" class="t">23:45:50</text>
<text x="992.0" y="920.6" text-anchor="middle" class="t">23:46:40</text>
<text x="1161.0" y="920.6" text-anchor="middle" class="t">23:47:30</text>
<text x="1330.0" y="920.6" text-anchor="middle" class="t">23:48:20</text>
<clipPath id="cp2"><rect x="479.5" y="675" width="1013.5" height="229"/></clipPath>
<g clip-path="url(#cp2)"><path d="M477.7 699.4 L481.1 699.6 L484.5 702.6 L487.9 700.4 L491.2 699.2 L494.6 700.4 L498.0 694.2 L501.4 696.0 L504.8 699.1 L508.1 698.3 L511.5 695.5 L514.9 702.6 L518.3 707.3 L521.7 705.3 L525.0 705.5 L528.4 706.1 L531.8 704.7 L535.2 709.3 L538.6 710.9 L541.9 710.7 L545.3 710.5 L548.7 710.4 L552.1 712.4 L555.5 716.3 L558.8 717.8 L562.2 711.6 L565.6 714.4 L569.0 717.0 L572.4 717.2 L575.7 718.6 L579.1 721.1 L582.5 720.5 L585.9 720.8 L589.3 720.3 L592.6 721.3 L596.0 723.4 L599.4 723.5 L602.8 724.4 L606.2 728.3 L609.5 729.3 L612.9 730.8 L616.3 727.4 L619.7 731.3 L623.1 733.1 L626.4 730.0 L629.8 732.6 L633.2 734.4 L636.6 735.5 L640.0 735.5 L643.3 735.7 L646.7 732.0 L650.1 731.8 L653.5 732.0 L656.9 733.9 L660.2 736.8 L663.6 741.1 L667.0 741.3 L670.4 742.7 L673.8 744.0 L677.1 746.3 L680.5 748.0 L683.9 748.3 L687.3 747.7 L690.7 747.4 L694.0 747.7 L697.4 749.3 L700.8 749.3 L704.2 746.4 L707.6 745.4 L710.9 746.4 L714.3 750.0 L717.7 752.0 L721.1 751.0 L724.5 750.5 L727.8 750.5 L731.2 752.3 L734.6 754.3 L738.0 750.3 L741.4 751.3 L744.7 755.9 L748.1 757.9 L751.5 759.0 L754.9 758.6 L758.3 761.1 L761.6 763.2 L765.0 764.2 L768.4 766.0 L771.8 767.3 L775.2 768.3 L778.5 768.3 L781.9 767.7 L785.3 770.3 L788.7 772.3 L792.1 772.9 L795.4 773.1 L798.8 771.5 L802.2 772.4 L805.6 771.0 L809.0 771.8 L812.3 770.5 L815.7 765.5 L819.1 769.5 L822.5 772.4 L825.9 771.6 L829.2 774.7 L832.6 777.0 L836.0 781.0 L839.4 780.6 L842.8 782.1 L846.1 781.1 L849.5 781.6 L852.9 781.3 L856.3 781.3 L859.7 783.1 L863.0 781.3 L866.4 781.8 L869.8 783.9 L873.2 786.0 L876.6 786.4 L879.9 790.7 L883.3 791.3 L886.6 792.1 L890.0 796.5 L891.5 796.6 L894.3 797.4 L898.0 795.4 L901.4 797.2 L904.8 798.7 L908.2 797.5 L911.5 798.9 L914.9 800.2 L918.3 798.5 L921.7 799.9 L925.0 801.2 L928.4 802.9 L931.8 804.6 L935.2 804.4 L938.5 807.0 L941.9 807.0 L945.3 806.9 L948.7 808.5 L952.0 809.8 L955.4 809.6 L958.8 814.6 L962.2 818.8 L965.6 819.7 L968.9 819.8 L972.3 816.7 L975.8 816.4 L979.2 820.6 L982.6 822.4 L985.9 822.3 L989.3 820.6 L992.7 821.3 L996.1 822.2 L999.5 820.5 L1002.8 823.9 L1006.2 827.7 L1009.6 827.6 L1013.0 827.4 L1016.3 829.6 L1019.7 833.2 L1023.1 833.7 L1026.5 830.3 L1029.8 831.6 L1033.2 834.4 L1036.6 834.4 L1040.0 834.2 L1043.3 832.5 L1046.7 832.3 L1050.1 833.5 L1053.5 835.4 L1056.8 834.6 L1060.2 836.0 L1063.6 840.6 L1067.1 841.5 L1070.5 840.9 L1073.8 840.5 L1077.2 843.3 L1080.6 844.5 L1084.0 841.6 L1087.3 842.6 L1090.7 844.7 L1094.1 843.4 L1097.5 840.9 L1100.9 840.3 L1104.2 842.6 L1107.6 845.0 L1111.0 846.1 L1114.4 845.9 L1117.7 846.4 L1121.1 851.5 L1124.5 854.1 L1127.9 855.9 L1131.4 860.4 L1134.7 861.4 L1138.1 861.2 L1141.4 860.2 L1144.8 859.9 L1148.2 863.7 L1151.6 864.5 L1154.9 864.2 L1158.3 863.5 L1161.6 866.5 L1165.1 868.1 L1168.5 864.6 L1171.8 865.3 L1175.2 865.6 L1178.5 863.0 L1182.0 869.1 L1185.3 870.6 L1188.7 867.1 L1192.0 865.5 L1195.5 868.1 L1198.8 867.3 L1202.3 868.6 L1205.7 868.3 L1209.0 871.6 L1212.5 874.4 L1215.8 870.8 L1219.2 869.4 L1222.5 870.9 L1226.0 872.0 L1229.2 873.4 L1232.7 874.5 L1236.0 878.4 L1239.4 875.3 L1242.7 875.6 L1246.2 875.3 L1249.6 878.0 L1252.9 877.7 L1256.3 877.8 L1259.7 877.6 L1263.1 876.5 L1266.4 876.7 L1269.8 879.3 L1273.1 880.0 L1276.6 881.5 L1280.3 881.8 L1283.4 880.6 L1286.9 883.6 L1290.2 881.6 L1293.6 883.2 L1296.9 883.2 L1300.4 885.1 L1303.7 883.2 L1307.1 880.3 L1310.4 880.8 L1313.8 881.3 L1317.1 881.6 L1320.6 880.7 L1323.9 882.3 L1327.3 881.8 L1330.6 881.3 L1334.1 882.6 L1337.4 884.3 L1340.8 884.0 L1344.1 883.1 L1347.5 882.6 L1351.1 883.1 L1354.4 882.2 L1357.8 884.2 L1361.1 885.3 L1364.6 885.7 L1367.9 883.9 L1371.3 885.4 L1374.6 885.2 L1378.1 885.2 L1381.4 885.3 L1384.8 885.1 L1388.2 884.4 L1391.5 884.4 L1395.0 884.3 L1398.3 885.3 L1401.7 884.5 L1405.0 883.8 L1408.5 882.6 L1411.8 883.2 L1415.2 884.3 L1418.5 884.3 L1421.9 883.0" class="l"/>
<path d="M477.7 699.4h0M481.1 699.6h0M484.5 702.6h0M487.9 700.4h0M491.2 699.2h0M494.6 700.4h0M498.0 694.2h0M501.4 696.0h0M504.8 699.1h0M508.1 698.3h0M511.5 695.5h0M514.9 702.6h0M518.3 707.3h0M521.7 705.3h0M525.0 705.5h0M528.4 706.1h0M531.8 704.7h0M535.2 709.3h0M538.6 710.9h0M541.9 710.7h0M545.3 710.5h0M548.7 710.4h0M552.1 712.4h0M555.5 716.3h0M558.8 717.8h0M562.2 711.6h0M565.6 714.4h0M569.0 717.0h0M572.4 717.2h0M575.7 718.6h0M579.1 721.1h0M582.5 720.5h0M585.9 720.8h0M589.3 720.3h0M592.6 721.3h0M596.0 723.4h0M599.4 723.5h0M602.8 724.4h0M606.2 728.3h0M609.5 729.3h0M612.9 730.8h0M616.3 727.4h0M619.7 731.3h0M623.1 733.1h0M626.4 730.0h0M629.8 732.6h0M633.2 734.4h0M636.6 735.5h0M640.0 735.5h0M643.3 735.7h0M646.7 732.0h0M650.1 731.8h0M653.5 732.0h0M656.9 733.9h0M660.2 736.8h0M663.6 741.1h0M667.0 741.3h0M670.4 742.7h0M673.8 744.0h0M677.1 746.3h0M680.5 748.0h0M683.9 748.3h0M687.3 747.7h0M690.7 747.4h0M694.0 747.7h0M697.4 749.3h0M700.8 749.3h0M704.2 746.4h0M707.6 745.4h0M710.9 746.4h0M714.3 750.0h0M717.7 752.0h0M721.1 751.0h0M724.5 750.5h0M727.8 750.5h0M731.2 752.3h0M734.6 754.3h0M738.0 750.3h0M741.4 751.3h0M744.7 755.9h0M748.1 757.9h0M751.5 759.0h0M754.9 758.6h0M758.3 761.1h0M761.6 763.2h0M765.0 764.2h0M768.4 766.0h0M771.8 767.3h0M775.2 768.3h0M778.5 768.3h0M781.9 767.7h0M785.3 770.3h0M788.7 772.3h0M792.1 772.9h0M795.4 773.1h0M798.8 771.5h0M802.2 772.4h0M805.6 771.0h0M809.0 771.8h0M812.3 770.5h0M815.7 765.5h0M819.1 769.5h0M822.5 772.4h0M825.9 771.6h0M829.2 774.7h0M832.6 777.0h0M836.0 781.0h0M839.4 780.6h0M842.8 782.1h0M846.1 781.1h0M849.5 781.6h0M852.9 781.3h0M856.3 781.3h0M859.7 783.1h0M863.0 781.3h0M866.4 781.8h0M869.8 783.9h0M873.2 786.0h0M876.6 786.4h0M879.9 790.7h0M883.3 791.3h0M886.6 792.1h0M890.0 796.5h0M891.5 796.6h0M894.3 797.4h0M898.0 795.4h0M901.4 797.2h0M904.8 798.7h0M908.2 797.5h0M911.5 798.9h0M914.9 800.2h0M918.3 798.5h0M921.7 799.9h0M925.0 801.2h0M928.4 802.9h0M931.8 804.6h0M935.2 804.4h0M938.5 807.0h0M941.9 807.0h0M945.3 806.9h0M948.7 808.5h0M952.0 809.8h0M955.4 809.6h0M958.8 814.6h0M962.2 818.8h0M965.6 819.7h0M968.9 819.8h0M972.3 816.7h0M975.8 816.4h0M979.2 820.6h0M982.6 822.4h0M985.9 822.3h0M989.3 820.6h0M992.7 821.3h0M996.1 822.2h0M999.5 820.5h0M1002.8 823.9h0M1006.2 827.7h0M1009.6 827.6h0M1013.0 827.4h0M1016.3 829.6h0M1019.7 833.2h0M1023.1 833.7h0M1026.5 830.3h0M1029.8 831.6h0M1033.2 834.4h0M1036.6 834.4h0M1040.0 834.2h0M1043.3 832.5h0M1046.7 832.3h0M1050.1 833.5h0M1053.5 835.4h0M1056.8 834.6h0M1060.2 836.0h0M1063.6 840.6h0M1067.1 841.5h0M1070.5 840.9h0M1073.8 840.5h0M1077.2 843.3h0M1080.6 844.5h0M1084.0 841.6h0M1087.3 842.6h0M1090.7 844.7h0M1094.1 843.4h0M1097.5 840.9h0M1100.9 840.3h0M1104.2 842.6h0M1107.6 845.0h0M1111.0 846.1h0M1114.4 845.9h0M1117.7 846.4h0M1121.1 851.5h0M1124.5 854.1h0M1127.9 855.9h0M1131.4 860.4h0M1134.7 861.4h0M1138.1 861.2h0M1141.4 860.2h0M1144.8 859.9h0M1148.2 863.7h0M1151.6 864.5h0M1154.9 864.2h0M1158.3 863.5h0M1161.6 866.5h0M1165.1 868.1h0M1168.5 864.6h0M1171.8 865.3h0M1175.2 865.6h0M1178.5 863.0h0M1182.0 869.1h0M1185.3 870.6h0M1188.7 867.1h0M1192.0 865.5h0M1195.5 868.1h0M1198.8 867.3h0M1202.3 868.6h0M1205.7 868.3h0M1209.0 871.6h0M1212.5 874.4h0M1215.8 870.8h0M1219.2 869.4h0M1222.5 870.9h0M1226.0 872.0h0M1229.2 873.4h0M1232.7 874.5h0M1236.0 878.4h0M1239.4 875.3h0M1242.7 875.6h0M1246.2 875.3h0M1249.6 878.0h0M1252.9 877.7h0M1256.3 877.8h0M1259.7 877.6h0M1263.1 876.5h0M1266.4 876.7h0M1269.8 879.3h0M1273.1 880.0h0M1276.6 881.5h0M1280.3 881.8h0M1283.4 880.6h0M1286.9 883.6h0M1290.2 881.6h0M1293.6 883.2h0M1296.9 883.2h0M1300.4 885.1h0M1303.7 883.2h0M1307.1 880.3h0M1310.4 880.8h0M1313.8 881.3h0M1317.1 881.6h0M1320.6 880.7h0M1323.9 882.3h0M1327.3 881.8h0M1330.6 881.3h0M1334.1 882.6h0M1337.4 884.3h0M1340.8 884.0h0M1344.1 883.1h0M1347.5 882.6h0M1351.1 883.1h0M1354.4 882.2h0M1357.8 884.2h0M1361.1 885.3h0M1364.6 885.7h0M1367.9 883.9h0M1371.3 885.4h0M1374.6 885.2h0M1378.1 885.2h0M1381.4 885.3h0M1384.8 885.1h0M1388.2 884.4h0M1391.5 884.4h0M1395.0 884.3h0M1398.3 885.3h0M1401.7 884.5h0M1405.0 883.8h0M1408.5 882.6h0M1411.8 883.2h0M1415.2 884.3h0M1418.5 884.3h0M1421.9 883.0h0" class="d"/></g>
</svg>
</body></html>
